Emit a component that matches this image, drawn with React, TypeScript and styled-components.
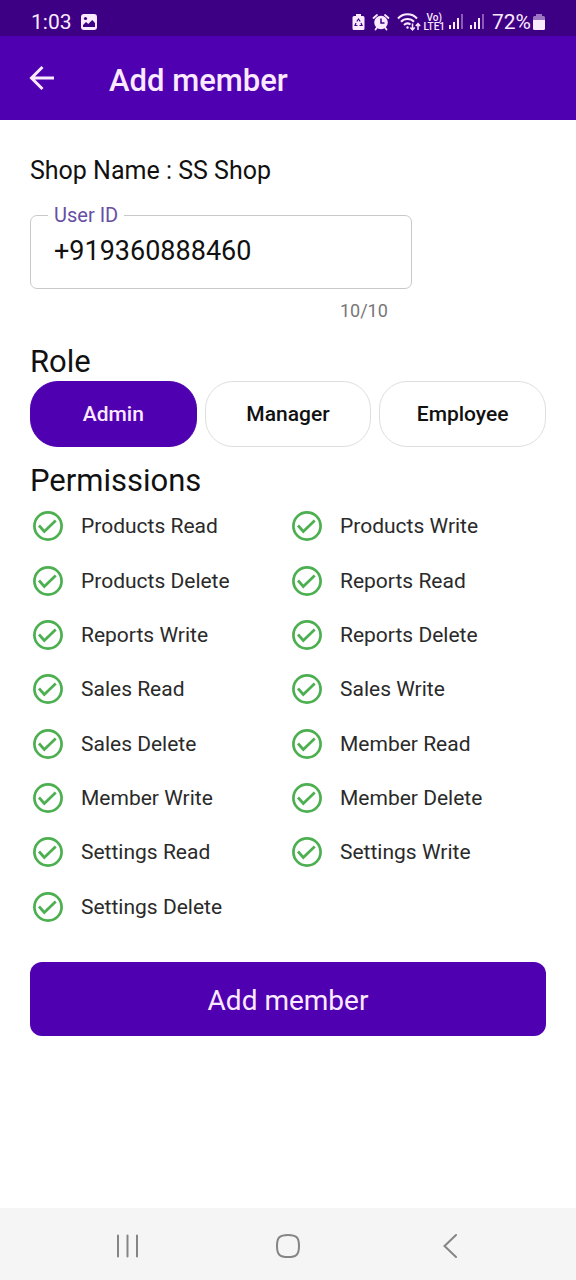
import React, { useState } from "react";
import styled, { createGlobalStyle } from "styled-components";

const purple = "#4f00b0";
const purpleDark = "#3d0084";
const onPurple = "#fbe9ff";
const green = "#4caf50";

const GlobalStyle = createGlobalStyle`
  *, *::before, *::after { box-sizing: border-box; }
  body {
    margin: 0;
    background: #fff;
    color: #111;
    font-family: Roboto, "Noto Sans", sans-serif;
  }
  button, input { font: inherit; color: inherit; }
`;

const Page = styled.div`
  display: flex;
  flex-direction: column;
  min-height: 100vh;
`;

const StatusBar = styled.div`
  display: flex;
  align-items: center;
  justify-content: space-between;
  height: 36px;
  padding: 7px 31px 0 31px;
  background: ${purpleDark};
  color: ${onPurple};
  font-size: 21px;
  line-height: 30px;
`;

const StatusGroup = styled.div<{ $gap: number }>`
  display: flex;
  align-items: center;
  gap: ${(p) => p.$gap}px;
`;

const Volte = styled.span`
  display: flex;
  flex-direction: column;
  align-items: center;
  font-size: 10px;
  font-weight: 500;
  line-height: 9px;
`;

const AppBar = styled.header`
  display: flex;
  align-items: center;
  gap: 52px;
  height: 84px;
  padding: 6px 29px 0;
  background: ${purple};
  color: ${onPurple};
`;

const BackButton = styled.button`
  display: flex;
  padding: 0 0 6px;
  border: 0;
  background: none;
  cursor: pointer;
`;

const Title = styled.h1`
  margin: 0;
  font-size: 31px;
  font-weight: 500;
  line-height: 40px;
`;

const Form = styled.form`
  display: flex;
  flex: 1;
  flex-direction: column;
  padding: 36px 30px;
`;

const ShopName = styled.p`
  margin: 0;
  font-size: 25px;
  line-height: 30px;
`;

const Field = styled.div`
  width: 74%;
  margin-top: 19px;
`;

const Outline = styled.fieldset`
  height: 84px;
  min-width: 0;
  margin: 0;
  padding: 0 17px;
  border: 1px solid #c9c9c9;
  border-radius: 7px;
`;

const Legend = styled.legend`
  padding: 0 6px;
  color: #674fa3;
  font-size: 20px;
  line-height: 20px;
`;

const TextInput = styled.input`
  display: block;
  width: 100%;
  height: 52px;
  padding: 0 6px;
  border: 0;
  outline: 0;
  background: none;
  font-size: 27px;
`;

const Counter = styled.div`
  padding: 12px 24px 0 0;
  color: #777;
  font-size: 18px;
  line-height: 20px;
  text-align: right;
`;

const SectionTitle = styled.h2<{ $space: number }>`
  margin: 0;
  padding-top: ${(p) => p.$space}px;
  font-size: 31px;
  font-weight: 400;
  line-height: 36px;
`;

const Roles = styled.div`
  display: grid;
  grid-template-columns: repeat(3, 1fr);
  gap: 8px;
  padding-top: 1px;
`;

const RoleButton = styled.button<{ $selected: boolean }>`
  height: 66px;
  padding: 0;
  border: 1px solid ${(p) => (p.$selected ? purple : "#dedede")};
  border-radius: 28px;
  background: ${(p) => (p.$selected ? purple : "#fff")};
  color: ${(p) => (p.$selected ? onPurple : "#111")};
  font-size: 21px;
  font-weight: 500;
  cursor: pointer;
`;

const Permissions = styled.div`
  display: grid;
  grid-template-columns: repeat(2, 1fr);
  grid-auto-rows: 1fr;
  column-gap: 2px;
  min-height: 435px;
`;

const Permission = styled.label`
  display: flex;
  align-items: center;
  gap: 17px;
  padding-left: 2px;
  color: #2a2a2a;
  font-size: 21px;
  cursor: pointer;
`;

const TickBox = styled.span`
  display: grid;
  width: 32px;
  height: 32px;

  > * { grid-area: 1 / 1; }
`;

const Tick = styled.input`
  width: 32px;
  height: 32px;
  margin: 0;
  appearance: none;

  &:not(:checked) + svg path { visibility: hidden; }
`;

const TickMark = styled.svg`
  fill: none;
  stroke: ${green};
  pointer-events: none;
`;

const Submit = styled.button`
  height: 74px;
  margin-top: 28px;
  padding: 2px 0 0;
  border: 0;
  border-radius: 12px;
  background: ${purple};
  color: ${onPurple};
  font-size: 28px;
  cursor: pointer;
`;

const NavBar = styled.nav`
  display: grid;
  grid-template-columns: repeat(3, 1fr);
  height: 72px;
  padding: 4px 45px 0;
  background: #f5f5f5;
`;

const NavButton = styled.button`
  display: flex;
  align-items: center;
  justify-content: center;
  padding: 0;
  border: 0;
  background: none;
  color: #858585;
  cursor: pointer;
`;

const PictureIcon = () => (
  <svg width="18" height="18" viewBox="0 0 18 18" aria-hidden="true">
    <rect x="1" y="1" width="16" height="16" rx="3" fill="currentColor" />
    <circle cx="5.5" cy="5.5" r="1.6" fill={purpleDark} />
    <path d="M3 14v-2l3-3 2.3 2.1L12.2 7 15 10v4z" fill={purpleDark} />
  </svg>
);

const BatterySaverIcon = () => (
  <svg width="13" height="18" viewBox="0 0 13 18" aria-hidden="true">
    <path d="M4 1h5v2h2a1.5 1.5 0 0 1 1.5 1.5v11A1.5 1.5 0 0 1 11 17H2a1.5 1.5 0 0 1-1.5-1.5v-11A1.5 1.5 0 0 1 2 3h2z" fill="currentColor" />
    <path d="M4.8 8.5 6.5 6l1.7 2.5M9 10l1 2.5H7.5M5.5 12.5H3L4 10" fill="none" stroke={purpleDark} strokeWidth="1.2" />
  </svg>
);

const AlarmIcon = () => (
  <svg width="18" height="18" viewBox="0 0 18 18" aria-hidden="true">
    <circle cx="9" cy="9.5" r="6.8" fill="currentColor" />
    <path d="M1.5 5 5 2M16.5 5 13 2M5 14.5l-1.5 2M13 14.5l1.5 2" stroke="currentColor" strokeWidth="1.8" strokeLinecap="round" />
    <path d="M9 5.5V10h3.5" fill="none" stroke={purpleDark} strokeWidth="1.5" />
  </svg>
);

const WifiIcon = () => (
  <svg width="24" height="20" viewBox="0 0 24 20" fill="none" stroke="currentColor" strokeWidth="2" aria-hidden="true">
    <path d="M1 6.5a13 13 0 0 1 19 0M4 9.8a9 9 0 0 1 13 0M7 13a5 5 0 0 1 6.5-.5" />
    <circle cx="10.5" cy="15.5" r="1.2" fill="currentColor" stroke="none" />
    <path d="M15.5 11.5v6M13.3 15.5l2.2 2.3 2.2-2.3M21 18v-6M18.8 14l2.2-2.3 2.2 2.3" strokeWidth="1.5" />
  </svg>
);

const SignalIcon = () => (
  <svg width="14" height="17" viewBox="0 0 14 17" fill="currentColor" aria-hidden="true">
    <rect x="0" y="12" width="2" height="4" />
    <rect x="4" y="9" width="2" height="7" />
    <rect x="8" y="5" width="2" height="11" />
    <rect x="12" y="1" width="2" height="15" opacity="0.4" />
  </svg>
);

const BatteryIcon = () => (
  <svg width="12" height="18" viewBox="0 0 12 18" fill="currentColor" aria-hidden="true">
    <path d="M3 1h6v2h1.5A1.5 1.5 0 0 1 12 4.5V7H0V4.5A1.5 1.5 0 0 1 1.5 3H3z" opacity="0.5" />
    <path d="M0 7h12v8.5a1.5 1.5 0 0 1-1.5 1.5h-9A1.5 1.5 0 0 1 0 15.5z" />
  </svg>
);

const roles = ["Admin", "Manager", "Employee"];

const permissions = [
  "Products Read",
  "Products Write",
  "Products Delete",
  "Reports Read",
  "Reports Write",
  "Reports Delete",
  "Sales Read",
  "Sales Write",
  "Sales Delete",
  "Member Read",
  "Member Write",
  "Member Delete",
  "Settings Read",
  "Settings Write",
  "Settings Delete",
];

export default function App() {
  const [role, setRole] = useState("Admin");
  const [userId, setUserId] = useState("+919360888460");

  return (
    <>
      <GlobalStyle />
      <Page>
        <StatusBar>
          <StatusGroup $gap={8}>
            <span>1:03</span>
            <PictureIcon />
          </StatusGroup>
          <StatusGroup $gap={8}>
            <StatusGroup $gap={4}>
              <StatusGroup $gap={7}>
                <BatterySaverIcon />
                <AlarmIcon />
                <StatusGroup $gap={2}>
                  <WifiIcon />
                  <Volte>
                    <span>Vo)</span>
                    <span>LTE1</span>
                  </Volte>
                </StatusGroup>
              </StatusGroup>
              <StatusGroup $gap={7}>
                <SignalIcon />
                <SignalIcon />
              </StatusGroup>
            </StatusGroup>
            <StatusGroup $gap={2}>
              <span>72%</span>
              <BatteryIcon />
            </StatusGroup>
          </StatusGroup>
        </StatusBar>

        <AppBar>
          <BackButton type="button" aria-label="Back">
            <svg width="28" height="26" viewBox="0 0 28 26" fill="none" stroke="currentColor" strokeWidth="3">
              <path d="M25 13H3M13.5 2 2.5 13l11 11" />
            </svg>
          </BackButton>
          <Title>Add member</Title>
        </AppBar>

        <Form onSubmit={(e) => e.preventDefault()}>
          <ShopName>Shop Name : SS Shop</ShopName>

          <Field>
            <Outline>
              <Legend>
                <label htmlFor="user-id">User ID</label>
              </Legend>
              <TextInput id="user-id" type="tel" value={userId} onChange={(e) => setUserId(e.target.value)} />
            </Outline>
            <Counter>10/10</Counter>
          </Field>

          <SectionTitle $space={23}>Role</SectionTitle>
          <Roles>
            {roles.map((name) => (
              <RoleButton
                key={name}
                type="button"
                $selected={name === role}
                aria-pressed={name === role}
                onClick={() => setRole(name)}
              >
                {name}
              </RoleButton>
            ))}
          </Roles>

          <SectionTitle $space={16}>Permissions</SectionTitle>
          <Permissions>
            {permissions.map((name) => (
              <Permission key={name}>
                <TickBox>
                  <Tick type="checkbox" defaultChecked />
                  <TickMark width="32" height="32" viewBox="0 0 32 32" strokeWidth="2.7" aria-hidden="true">
                    <circle cx="16" cy="16" r="13.6" />
                    <path d="M7 15.5l5.3 6L23.7 10.5" />
                  </TickMark>
                </TickBox>
                {name}
              </Permission>
            ))}
          </Permissions>

          <Submit type="submit">Add member</Submit>
        </Form>

        <NavBar>
          <NavButton type="button" aria-label="Recent apps">
            <svg width="26" height="24" viewBox="0 0 26 24" stroke="currentColor" strokeWidth="2" strokeLinecap="round">
              <path d="M5 1.5v21M14.5 1.5v21M24 1.5v21" />
            </svg>
          </NavButton>
          <NavButton type="button" aria-label="Home">
            <svg width="24" height="24" viewBox="0 0 24 24" fill="none" stroke="currentColor" strokeWidth="2">
              <path d="M12 1c8.5 0 11 2.5 11 11s-2.5 11-11 11S1 20.5 1 12 3.5 1 12 1z" />
            </svg>
          </NavButton>
          <NavButton type="button" aria-label="Back">
            <svg width="24" height="24" viewBox="0 0 24 24" fill="none" stroke="currentColor" strokeWidth="2" strokeLinecap="round">
              <path d="M18 1 6.5 12 18 23" />
            </svg>
          </NavButton>
        </NavBar>
      </Page>
    </>
  );
}
